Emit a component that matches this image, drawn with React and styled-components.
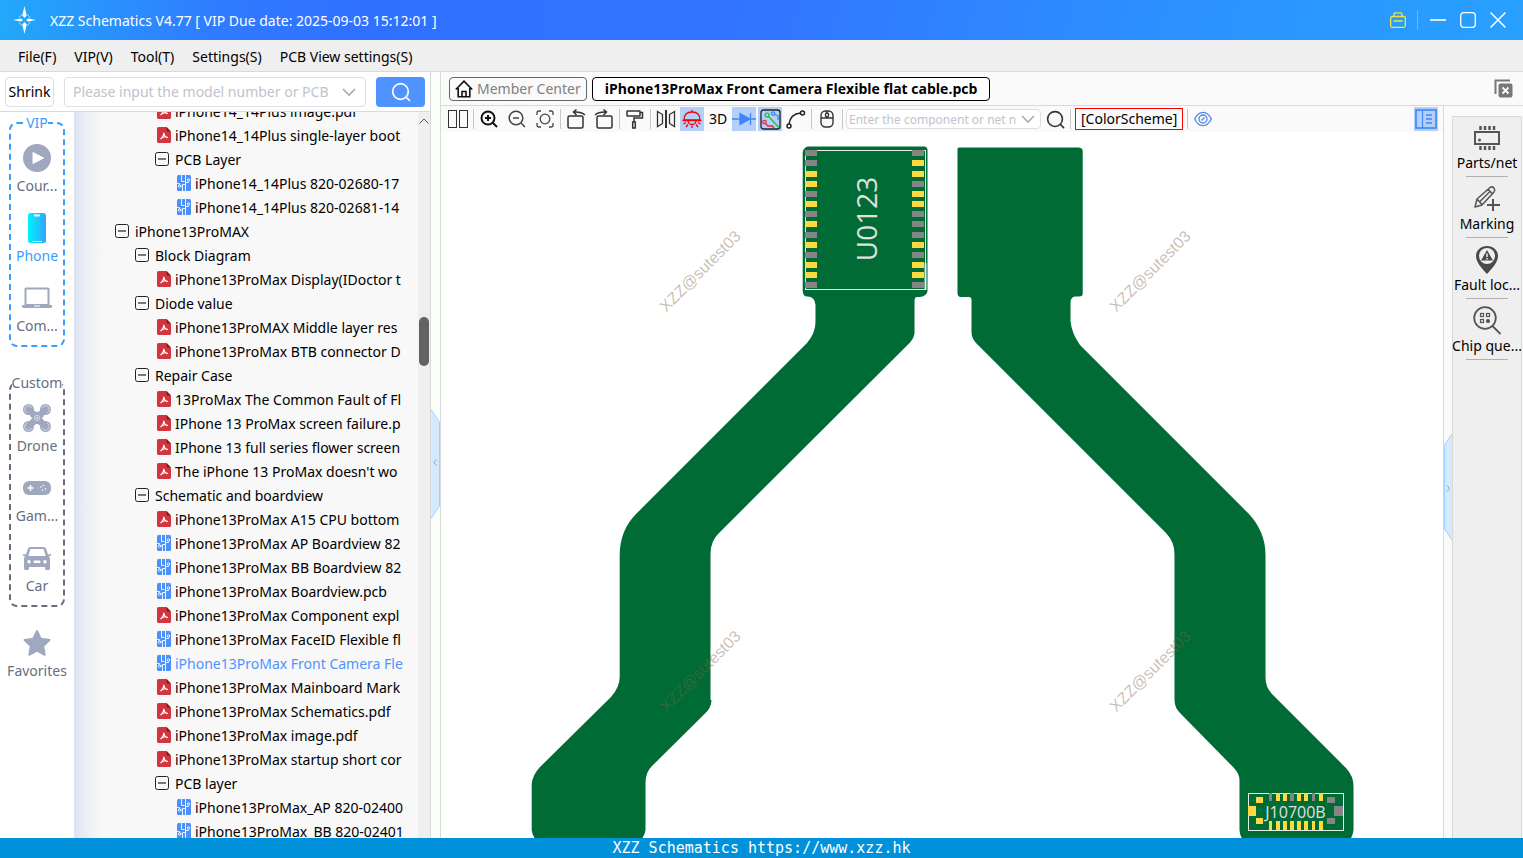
import styled, { createGlobalStyle } from "styled-components";

const GlobalStyle = createGlobalStyle`
  * {
    box-sizing: border-box;
  }
  body {
    margin: 0;
    font-family: "Noto Sans", "Open Sans", "Noto Sans CJK SC", sans-serif;
    font-size: 14px;
    color: #000;
    background: #fff;
  }
  button, input {
    font: inherit;
    color: inherit;
  }
  button {
    padding: 0;
    border: 0;
    background: none;
    cursor: pointer;
  }
  ul {
    margin: 0;
    padding: 0;
    list-style: none;
  }
  svg {
    display: block;
    flex: none;
  }
`;

const Window = styled.div`
  display: flex;
  flex-direction: column;
  height: 100vh;
  overflow: hidden;
`;

const TitleBar = styled.header`
  display: flex;
  align-items: center;
  flex: none;
  height: 40px;
  padding: 0 10px 0 12px;
  color: #fff;
  background: linear-gradient(100deg, #22a9fa 0%, #2f7cff 14%, #3070ff 24%, #3274ff 48%, #2c92ff 78%, #28a0ff 100%);
`;

const Title = styled.h1`
  flex: 1;
  margin: 0 0 0 13px;
  font-size: 14px;
  font-weight: 400;
`;

const WindowButtons = styled.div`
  display: flex;
  align-items: center;
`;

const WindowButton = styled.button`
  display: flex;
  align-items: center;
  justify-content: center;
  width: 30px;
  height: 30px;
`;

const TitleDivider = styled.span`
  width: 1px;
  height: 20px;
  margin: 0 5px 0 4px;
  background: #6cb5ff;
`;

const MenuBar = styled.nav`
  display: flex;
  align-items: center;
  flex: none;
  height: 32px;
  padding: 2px 9px 0;
  background: #efefef;
  border-bottom: 1px solid #d9d9d9;
`;

const MenuItem = styled.button`
  padding: 0 9px;
`;

const Body = styled.div`
  display: flex;
  flex: 1;
  min-height: 0;
`;

const LeftPanel = styled.aside`
  display: flex;
  flex-direction: column;
  flex: none;
  width: 431px;
  border-right: 1px solid #d9d9d9;
`;

const SearchRow = styled.form`
  display: flex;
  align-items: center;
  gap: 10px;
  flex: none;
  height: 40px;
  padding: 0 5px;
  border-bottom: 1px solid #d9d9d9;
`;

const ShrinkButton = styled.button`
  width: 49px;
  height: 30px;
  border: 1px solid #dcdfe6;
  border-radius: 4px;
`;

const Combo = styled.label`
  display: flex;
  align-items: center;
  gap: 5px;
  flex: ${(props) => (props.$width ? "none" : 1)};
  width: ${(props) => props.$width || "auto"};
  height: ${(props) => props.$height};
  padding: 0 ${(props) => props.$pad} 0 0;
  border: 1px solid #dcdfe6;
  border-radius: 4px;
  background: #fff;
`;

const ComboInput = styled.input`
  flex: 1;
  min-width: 0;
  height: 100%;
  padding: 0 0 0 ${(props) => props.$pad};
  border: 0;
  outline: 0;
  background: none;
  font-size: ${(props) => props.$size};

  &::placeholder {
    color: #c0c4cc;
    opacity: 1;
  }
`;

const SearchButton = styled.button`
  display: flex;
  align-items: center;
  justify-content: center;
  width: 49px;
  height: 30px;
  border-radius: 4px;
  background: #4f93ff;
`;

const PanelBody = styled.div`
  display: flex;
  flex: 1;
  min-height: 0;
`;

const SideNav = styled.nav`
  display: flex;
  flex-direction: column;
  align-items: center;
  flex: none;
  width: 74px;
  background: #fff;
`;

const NavGroup = styled.section`
  width: 56px;
  height: 225px;
  margin: ${(props) => props.$gap} 0 0;
  border: 2px dashed ${(props) => props.$color};
  border-radius: 8px;
  display: flex;
  flex-direction: column;
  align-items: center;
`;

const NavLegend = styled.h2`
  margin: -11px 0 0;
  font-size: 14px;
  line-height: 20px;
  font-weight: 400;
  color: ${(props) => props.$color};
  background: #fff;
`;

const NavItem = styled.button`
  display: flex;
  flex-direction: column;
  align-items: center;
  gap: 2px;
  flex: none;
  width: 72px;
  height: 70px;
  padding-top: 9px;
  line-height: 20px;
  color: ${(props) => (props.$active ? "#3b9dff" : "#666e80")};
`;

const NavIcon = styled.span`
  display: flex;
  align-items: center;
  justify-content: center;
  height: 32px;
`;

const Favorites = styled(NavItem)`
  margin-top: 11px;
`;

const TreePane = styled.div`
  flex: 1;
  min-width: 0;
  padding-right: 12px;
  overflow: hidden;
  background: linear-gradient(90deg, #dce3f1 0, #e9edf4 10px, #f8f8f8 30px);
`;

const Tree = styled.ul`
  margin-top: -13px;
  overflow: hidden;
`;

const TreeRow = styled.li`
  display: flex;
  align-items: center;
  gap: ${(props) => (props.$folder ? "6px" : "4px")};
  height: 24px;
  padding-left: ${(props) => props.$indent};
  white-space: nowrap;
  color: ${(props) => (props.$selected ? "#4f93ff" : "#000")};
`;

const ScrollTrack = styled.div`
  display: flex;
  flex-direction: column;
  align-items: center;
  flex: none;
  width: 12px;
  padding-top: 6px;
  background: #efefef;
`;

const ScrollThumb = styled.div`
  width: 10px;
  height: 49px;
  margin-top: 193px;
  border-radius: 5px;
  background: #636363;
`;

const Splitter = styled.div`
  display: flex;
  align-items: center;
  flex: none;
  width: ${(props) => props.$width};
  padding-top: ${(props) => props.$shift};
  background: ${(props) => props.$color};
  border-${(props) => props.$side}: 1px solid #d9d9d9;
`;

const Workspace = styled.main`
  display: flex;
  flex-direction: column;
  flex: 1;
  min-width: 0;
`;

const TabBar = styled.div`
  display: flex;
  align-items: center;
  gap: 5px;
  flex: none;
  height: 34px;
  padding: 0 10px 0 8px;
  background: #fafafa;
  border-bottom: 1px solid #d9d9d9;
`;

const Tab = styled.button`
  display: flex;
  align-items: center;
  gap: 4px;
  height: 24px;
  padding: 0 ${(props) => (props.$active ? "12px" : "5px")};
  border: 1px solid ${(props) => (props.$active ? "#000" : "#666")};
  border-radius: 4px;
  color: ${(props) => (props.$active ? "#000" : "#808080")};
  background: ${(props) => (props.$active ? "#fff" : "#fafafa")};
  font-family: ${(props) => (props.$active ? '"Open Sans", sans-serif' : "inherit")};
  font-weight: ${(props) => (props.$active ? 700 : 400)};
  line-height: 20px;
`;

const CloseAll = styled.button`
  margin-left: auto;
`;

const Stage = styled.div`
  display: flex;
  flex: 1;
  min-height: 0;
`;

const Board = styled.section`
  display: flex;
  flex-direction: column;
  flex: 1;
  min-width: 0;
`;

const Toolbar = styled.div`
  display: flex;
  align-items: center;
  flex: none;
  height: 26px;
  padding: 0 5px 0 3px;
  background: #fafafa;

  ${Combo} {
    margin-left: 2px;
  }
`;

const Tool = styled.button`
  display: flex;
  align-items: center;
  justify-content: center;
  width: 28px;
  height: 24px;
  line-height: 24px;
`;

const ActiveTool = styled(Tool)`
  width: 24px;
  background: #b5cffb;

  & + & {
    margin-left: 2px;
  }
`;

const ToolDivider = styled.span`
  width: 1px;
  height: 20px;
  margin: 0 1px;
  background: #c8c8c8;
`;

const ColorScheme = styled.button`
  height: 22px;
  margin: 0 3px;
  padding: 0 5px;
  border: 1px solid #f00;
  line-height: 20px;
`;

const PanelToggle = styled(ActiveTool)`
  margin-left: auto;
`;

const Canvas = styled.div`
  flex: 1;
  min-height: 0;
  background: #fff;
`;

const Drawing = styled.svg`
  width: 100%;
  height: 100%;

  text {
    font-family: "Open Sans", sans-serif;
  }
  .watermark {
    font-family: "Liberation Sans", Arial, sans-serif;
    font-size: 16px;
    fill: #7d6645;
    fill-opacity: 0.42;
  }
`;

const RightRail = styled.aside`
  flex: none;
  width: 71px;
  padding: 10px 1px 0 0;
  background: #fafafa;
`;

const RailList = styled.div`
  display: flex;
  flex-direction: column;
  align-items: center;
  height: 100%;
  border: 1px solid #d9d9d9;
  border-bottom: 0;
  background: #efefef;
`;

const RailItem = styled.button`
  display: flex;
  flex-direction: column;
  align-items: center;
  flex: none;
  width: 72px;
  height: 61px;
  padding-top: 5px;
  line-height: 18px;
  white-space: nowrap;

  &::after {
    content: "";
    width: 42px;
    height: 1px;
    margin-top: 4px;
    background: #b0b0b0;
  }
`;

const StatusBar = styled.footer`
  display: flex;
  align-items: center;
  justify-content: center;
  flex: none;
  height: 20px;
  color: #fff;
  background: #0091da;
  font-family: "DejaVu Sans Mono", "Liberation Mono", monospace;
  font-size: 15px;
  line-height: 20px;
`;

const Logo = () => (
  <svg width="25" height="30" viewBox="0 0 25 30" fill="#fff">
    <circle cx="12.500" cy="15" r="6" fill="none" stroke="#9fd4ff" strokeDasharray="5 4.4" strokeDashoffset="-2" />
    <path d="M12.500 1L14.700 10.500L12.500 13L10.300 10.500ZM12.500 29L14.700 19.500L12.500 17L10.300 19.500ZM1 15L9 13.500L11 15L9 16.500ZM24 15L16 13.500L14 15L16 16.500Z" />
  </svg>
);

const Chevron = ({ size = 14 }) => (
  <svg width={size} height={size} viewBox="0 0 14 14" fill="none" stroke="#a8abb2" strokeWidth="1.6">
    <path d="M1 4L7 10L13 4" />
  </svg>
);

const Magnifier = ({ size = 20, color = "#333" }) => (
  <svg width={size} height={size} viewBox="0 0 20 20" fill="none" stroke={color} strokeWidth="1.7" strokeLinecap="round">
    <circle cx="9.500" cy="9.500" r="7.800" />
    <path d="M15.300 15.300L18.500 18.500" />
  </svg>
);

const PdfIcon = () => (
  <svg width="14" height="16" viewBox="0 0 14 16">
    <path d="M1.500 0H9.500L14 4.500V14.500Q14 16 12.500 16H1.500Q0 16 0 14.500V1.500Q0 0 1.500 0Z" fill="#d3353f" />
    <path d="M9.500 0L14 4.500H9.500Z" fill="#8f1a22" />
    <path d="M3.500 12C5 11 6.800 8.800 6.800 5.800C6.800 8.500 8.400 10.200 10.800 10.500" fill="none" stroke="#fff" strokeWidth="1.300" />
    <path d="M5 10.600Q7 9.600 9 9.900" fill="none" stroke="#fff" />
  </svg>
);

const PcbIcon = () => (
  <svg width="14" height="16" viewBox="0 0 14 16">
    <rect width="14" height="16" rx="1.500" fill="#4a90ff" />
    <g fill="none" stroke="#fff" strokeWidth="0.900">
      <path d="M4.500 0V6.500H7.500M8.500 0V16M8.500 7.500H11.500V6.500M0 8.500H2.500V10M3.500 11H5.500V16M5.500 11V9.500H8.500" />
      <circle cx="11.500" cy="5" r="1.200" />
      <circle cx="2.500" cy="11" r="1.200" />
    </g>
  </svg>
);

const Collapse = () => (
  <svg width="14" height="14" viewBox="0 0 14 14" fill="none" stroke="#222">
    <rect x="0.500" y="0.500" width="13" height="13" rx="2" />
    <path d="M3 7H11" strokeWidth="1.200" />
  </svg>
);

const navIcons = {
  play: (
    <svg width="28" height="28" viewBox="0 0 28 28">
      <circle cx="14" cy="14" r="14" fill="#9fa8bf" />
      <path d="M10 8.500L20.500 14L10 19.500Z" fill="#fff" stroke="#fff" strokeLinejoin="round" />
    </svg>
  ),
  phone: (
    <svg width="18" height="30" viewBox="0 0 18 30">
      <defs>
        <linearGradient id="screen">
          <stop offset="0" stopColor="#00f2fe" />
          <stop offset="1" stopColor="#35a4ff" />
        </linearGradient>
      </defs>
      <rect width="18" height="30" rx="2.500" fill="url(#screen)" />
      <path d="M6 1.500H12V2.500Q12 3.500 11 3.500H7Q6 3.500 6 2.500Z" fill="#fff" />
      <path d="M4 28.500H14" stroke="#bdf3ff" />
    </svg>
  ),
  laptop: (
    <svg width="30" height="22" viewBox="0 0 30 22" fill="#9fa8bf">
      <path fillRule="evenodd" d="M4 0.500H26Q27.500 0.500 27.500 2V18H2.500V2Q2.500 0.500 4 0.500ZM4.500 2.500V17H25.500V2.500Z" />
      <path d="M0 18H30V19.500Q30 21 28 21H2Q0 21 0 19.500Z" />
      <path d="M12 19H18" stroke="#fff" />
    </svg>
  ),
  drone: (
    <svg width="28" height="28" viewBox="0 0 28 28" fill="#9fa8bf">
      <path d="M5 5L14 11L23 5L17 14L23 23L14 17L5 23L11 14Z" stroke="#9fa8bf" strokeWidth="4" strokeLinejoin="round" />
      <circle cx="5.500" cy="5.500" r="5.500" />
      <circle cx="22.500" cy="5.500" r="5.500" />
      <circle cx="5.500" cy="22.500" r="5.500" />
      <circle cx="22.500" cy="22.500" r="5.500" />
      <g fill="none" stroke="#dfe3ec" strokeWidth="0.800">
        <circle cx="14" cy="14" r="2.600" />
        <path d="M9 4A3.800 3.800 0 1 0 4 9M19 4A3.800 3.800 0 1 1 24 9M9 24A3.800 3.800 0 1 1 4 19M19 24A3.800 3.800 0 1 0 24 19" />
      </g>
      <circle cx="14" cy="14" r="1.100" fill="#dfe3ec" />
    </svg>
  ),
  gamepad: (
    <svg width="28" height="14" viewBox="0 0 28 14">
      <rect width="28" height="14" rx="6" fill="#9fa8bf" />
      <path d="M7.500 4V10M4.500 7H10.500" stroke="#fff" strokeWidth="1.500" />
      <g fill="#fff">
        <circle cx="18" cy="6" r="0.800" />
        <circle cx="20.500" cy="4.500" r="0.800" />
        <circle cx="19.500" cy="9" r="0.800" />
        <circle cx="22.500" cy="8" r="0.800" />
      </g>
    </svg>
  ),
  car: (
    <svg width="28" height="23" viewBox="0 0 28 23" fill="#9fa8bf">
      <path
        fillRule="evenodd"
        d="M7.500 0H20.500Q22.500 0 23.200 2L25 7.500L28 7V8.500L26 9.500Q27 10.500 27 12V21.500Q27 23 25.500 23H23.500Q22 23 22 21.500V20H6V21.500Q6 23 4.500 23H2.500Q1 23 1 21.500V12Q1 10.500 2 9.500L0 8.500V7L3 7.500L4.800 2Q5.500 0 7.500 0ZM7.500 2L5.300 9H22.700L20.500 2Z"
      />
      <g fill="#fff">
        <circle cx="6" cy="14.800" r="1.700" />
        <circle cx="22" cy="14.800" r="1.700" />
        <rect x="10.500" y="13.500" width="7" height="2.500" rx="1" />
      </g>
    </svg>
  ),
  star: (
    <svg width="28" height="28" viewBox="0 0 28 28" fill="#9fa8bf" stroke="#9fa8bf" strokeWidth="2" strokeLinejoin="round">
      <path d="M14 2L17.700 9.700L26.500 11L20.200 17L21.700 25.800L14 21.700L6.300 25.800L7.800 17L1.500 11L10.300 9.700Z" />
    </svg>
  ),
};

const vipItems = [
  { label: "Cour...", icon: "play" },
  { label: "Phone", icon: "phone", active: true },
  { label: "Com...", icon: "laptop" },
];

const customItems = [
  { label: "Drone", icon: "drone" },
  { label: "Gam...", icon: "gamepad" },
  { label: "Car", icon: "car" },
];

const tree = [
  [4, "pdf", "iPhone14_14Plus image.pdf"],
  [4, "pdf", "iPhone14_14Plus single-layer boot"],
  [4, "dir", "PCB Layer"],
  [5, "pcb", "iPhone14_14Plus 820-02680-17"],
  [5, "pcb", "iPhone14_14Plus 820-02681-14"],
  [2, "dir", "iPhone13ProMAX"],
  [3, "dir", "Block Diagram"],
  [4, "pdf", "iPhone13ProMax Display(IDoctor t"],
  [3, "dir", "Diode value"],
  [4, "pdf", "iPhone13ProMAX Middle layer res"],
  [4, "pdf", "iPhone13ProMax BTB connector D"],
  [3, "dir", "Repair Case"],
  [4, "pdf", "13ProMax The Common Fault of Fl"],
  [4, "pdf", "IPhone 13 ProMax screen failure.p"],
  [4, "pdf", "IPhone 13 full series flower screen"],
  [4, "pdf", "The iPhone 13 ProMax doesn't wo"],
  [3, "dir", "Schematic and boardview"],
  [4, "pdf", "iPhone13ProMax A15 CPU bottom"],
  [4, "pcb", "iPhone13ProMax AP Boardview 82"],
  [4, "pcb", "iPhone13ProMax BB Boardview 82"],
  [4, "pcb", "iPhone13ProMax Boardview.pcb"],
  [4, "pdf", "iPhone13ProMax Component expl"],
  [4, "pcb", "iPhone13ProMax FaceID Flexible fl"],
  [4, "pcb", "iPhone13ProMax Front Camera Fle", true],
  [4, "pdf", "iPhone13ProMax Mainboard Mark"],
  [4, "pdf", "iPhone13ProMax Schematics.pdf"],
  [4, "pdf", "iPhone13ProMax image.pdf"],
  [4, "pdf", "iPhone13ProMax startup short cor"],
  [4, "dir", "PCB layer"],
  [5, "pcb", "iPhone13ProMax_AP 820-02400"],
  [5, "pcb", "iPhone13ProMax_BB 820-02401"],
];

// folder toggles sit two pixels left of the file icons
const indentOf = (level, kind) => `${level * 20 + (kind === "dir" ? 1 : 3)}px`;

const treeIcons = { pdf: <PdfIcon />, pcb: <PcbIcon />, dir: <Collapse /> };

function NavButton({ item }) {
  return (
    <NavItem $active={item.active}>
      <NavIcon>{navIcons[item.icon]}</NavIcon>
      {item.label}
    </NavItem>
  );
}

const toolIcons = {
  split: (
    <svg width="20" height="18" viewBox="0 0 20 18" fill="none" stroke="#333">
      <rect x="0.500" y="0.500" width="8" height="17" />
      <rect x="11.500" y="0.500" width="8" height="17" />
    </svg>
  ),
  zoomIn: (
    <svg width="18" height="18" viewBox="0 0 18 18" fill="none" stroke="#111" strokeWidth="2">
      <circle cx="8" cy="8" r="6.500" />
      <path d="M13 13L17 17M5 8H11M8 5V11" />
    </svg>
  ),
  zoomOut: (
    <svg width="18" height="18" viewBox="0 0 18 18" fill="none" stroke="#444" strokeWidth="1.500">
      <circle cx="8" cy="8" r="6.800" />
      <path d="M13 13L17 17M5 8H11" />
    </svg>
  ),
  fit: (
    <svg width="18" height="18" viewBox="0 0 18 18" fill="none" stroke="#444" strokeWidth="1.300">
      <circle cx="9" cy="9" r="4.800" />
      <path d="M1 5V3Q1 1 3 1H5M13 1H15Q17 1 17 3V5M17 13V15Q17 17 15 17H13M5 17H3Q1 17 1 15V13" />
    </svg>
  ),
  rotateLeft: (
    <svg width="20" height="20" viewBox="0 0 20 20" fill="none" stroke="#333" strokeWidth="1.500">
      <rect x="2" y="7" width="15" height="12" rx="1.500" />
      <path d="M19 6Q15 2.500 8 3M10.500 0.500L7.500 3L10.500 6" />
    </svg>
  ),
  rotateRight: (
    <svg width="20" height="20" viewBox="0 0 20 20" fill="none" stroke="#333" strokeWidth="1.500">
      <rect x="3" y="7" width="15" height="12" rx="1.500" />
      <path d="M1 6Q5 2.500 12 3M9.500 0.500L12.500 3L9.500 6" />
    </svg>
  ),
  paint: (
    <svg width="18" height="20" viewBox="0 0 18 20" fill="none" stroke="#333" strokeWidth="1.500">
      <rect x="1" y="2" width="13" height="5" rx="0.500" />
      <path d="M14 3.500H16.500V9H8V13" />
      <rect x="6.700" y="13" width="2.600" height="6" />
    </svg>
  ),
  mirror: (
    <svg width="20" height="18" viewBox="0 0 20 18" fill="none" stroke="#333" strokeWidth="1.300">
      <path d="M1.500 1.500L6.500 4.500V13.500L1.500 16.500ZM18.500 1.500L13.500 4.500V13.500L18.500 16.500Z" />
      <path d="M10 0V18" strokeWidth="2" />
    </svg>
  ),
  lamp: (
    <svg width="20" height="20" viewBox="0 0 20 20" fill="none" stroke="#f00" strokeWidth="1.300">
      <path d="M2 11Q2 3 10 3Q18 3 18 11Z" />
      <path d="M0.500 11.500H19.500M6 12Q6.500 15.500 10 15.500Q13.500 15.500 14 12M10 1V3M10 16.500V19M6 15.500L4 18M14 15.500L16 18M4 13.500L1.500 15M16 13.500L18.500 15" />
    </svg>
  ),
  diode: (
    <svg width="24" height="14" viewBox="0 0 24 14" fill="#4086f5" stroke="#4086f5" strokeWidth="1.300">
      <path d="M0 7H24M18.500 1V13" />
      <path d="M8 1.500L18 7L8 12.500Z" />
    </svg>
  ),
  route: (
    <svg width="21" height="21" viewBox="0 0 21 21" fill="none" strokeWidth="1.300">
      <rect x="1" y="1" width="19" height="19" rx="2.500" stroke="#222" />
      <g stroke="#22c03a">
        <circle cx="7" cy="6" r="1.900" />
        <path d="M8.500 7.500L19 18.500" />
      </g>
      <g stroke="#4086f5">
        <circle cx="13" cy="4.500" r="1.700" />
        <path d="M14.500 5.500L18 7V11" />
      </g>
      <g stroke="#f02a2a">
        <circle cx="4.500" cy="13" r="1.700" />
        <path d="M5.500 14.500L8 17H12.500L14 19" />
      </g>
    </svg>
  ),
  curve: (
    <svg width="20" height="20" viewBox="0 0 20 20" fill="none" stroke="#222" strokeWidth="1.500">
      <circle cx="16.500" cy="4" r="2" />
      <circle cx="3" cy="17" r="2" />
      <path d="M14.500 4Q4.500 5 3 15" />
    </svg>
  ),
  mouse: (
    <svg width="14" height="18" viewBox="0 0 14 18" fill="none" stroke="#333" strokeWidth="1.400">
      <rect x="1" y="1" width="12" height="16" rx="4.500" />
      <path d="M1 8H13M7 1V3M7 6.500V8" />
      <rect x="5.500" y="3" width="3" height="4" rx="1.500" />
    </svg>
  ),
  eye: (
    <svg width="18" height="16" viewBox="0 0 18 16" fill="none" stroke="#4f86e8" strokeWidth="1.300">
      <path d="M0.700 8Q4 1.300 9 1.300Q14 1.300 17.300 8Q14 14.700 9 14.700Q4 14.700 0.700 8Z" />
      <circle cx="9" cy="8" r="4" />
      <path d="M7.500 9.500L10.500 6.500" />
    </svg>
  ),
  panel: (
    <svg width="22" height="20" viewBox="0 0 22 20" fill="none" stroke="#4086f5" strokeWidth="1.600">
      <rect x="1" y="1" width="20" height="18" />
      <path d="M7.500 1V19" strokeWidth="1.200" />
      <path d="M11 6H17M11 10H17M11 14H17" strokeWidth="1.300" />
    </svg>
  ),
};

const railItems = [
  {
    label: "Parts/net",
    icon: (
      <svg width="26" height="32" viewBox="0 0 26 32" fill="none" stroke="#555" strokeWidth="2">
        <rect x="1" y="10" width="24" height="12" />
        <path d="M6.500 4V8M11 4V8M15.500 4V8M20 4V8M6.500 24V28M11 24V28M15.500 24V28M20 24V28" strokeWidth="2.500" />
        <circle cx="5.500" cy="18" r="1.500" fill="#555" stroke="none" />
      </svg>
    ),
  },
  {
    label: "Marking",
    icon: (
      <svg width="26" height="32" viewBox="0 0 26 32" fill="none" stroke="#555" strokeWidth="1.500">
        <path d="M1 24L3 16L16 4.500Q18 3 20 5Q21.500 7 20 9L8 22ZM3 16L8 21.500M14 6L18.500 11M6 18.500L15.500 9" strokeLinejoin="round" />
        <path d="M19 16V28M13 22H26" strokeWidth="2" />
      </svg>
    ),
  },
  {
    label: "Fault loc...",
    icon: (
      <svg width="26" height="32" viewBox="0 0 26 32">
        <path d="M13 2C19.500 2 24 6.500 24 12C24 18.500 18 24.500 13 30C8 24.500 2 18.500 2 12C2 6.500 6.500 2 13 2Z" fill="#4a4a4a" />
        <circle cx="13" cy="12" r="8" fill="#efefef" />
        <path d="M13 6L19 16.500H7Z" fill="#4a4a4a" />
        <path d="M13 9.500V13M13 14V15.500" stroke="#efefef" strokeWidth="1.500" />
      </svg>
    ),
  },
  {
    label: "Chip que...",
    icon: (
      <svg width="28" height="32" viewBox="0 0 28 32" fill="none" stroke="#555" strokeWidth="1.800">
        <circle cx="12" cy="13" r="10.800" />
        <path d="M19.500 21L27.500 29" />
        <g strokeWidth="1.200">
          <rect x="7.500" y="8.500" width="3" height="3" />
          <rect x="13.500" y="8.500" width="3" height="3" />
          <rect x="7.500" y="14.500" width="3" height="3" />
          <circle cx="15" cy="16" r="1.500" fill="#555" />
        </g>
      </svg>
    ),
  },
];

const padRows = [150, 160, 171, 181, 191, 201, 211, 221, 232, 242, 252, 262, 272, 282];
const leftPads = "ggyygygygygyyg";
const rightPads = "gyygyygggygyyg";
const connectorCols = [
  [1269, 3, "g"],
  [1276, 4, "y"],
  [1283, 4, "y"],
  [1290, 4, "g"],
  [1297, 4, "y"],
  [1304, 4, "y"],
  [1312, 3, "g"],
  [1319, 4, "y"],
];
const padColor = (code) => (code === "g" ? "#858585" : "#ffd940");

function FlexCable() {
  return (
    <Drawing viewBox="441 132 1002 706" preserveAspectRatio="xMinYMin slice">
      <g fill="#006b35">
        <path d="M808 146.500H924Q927.500 146.500 927.500 150V291Q927 296 920 297H917Q914.500 297 914.500 301V333Q914 338 910 342.500L719 533Q710.500 541 710.500 554V700H711.500Q711.500 708 704 714.500L652 766Q645.500 772 645.500 783V830Q645 835 641 840H536Q532 835 531.700 830V784Q532.500 775 540 767L611 697Q619.700 687 619.700 677V555Q619.700 530 637 513L807 343Q815.500 333 815.500 322V305Q815 297 808 296.500Q803 297 802.700 291V152Q804 147 808 146.500Z" />
        <path d="M959 147.500H1078Q1082.700 147.500 1082.700 151V294Q1082.500 296.500 1079 296.500H1075Q1070.500 297 1070.500 303V321Q1071.500 333 1080 345L1249 514Q1265.500 532 1265.500 555V678Q1265.500 687 1272 694L1346 768Q1353.500 776 1353.500 786V830Q1353 835 1350 840H1243Q1239.500 835 1239.500 830V780Q1239.500 774 1234 768L1181 714Q1174.500 708 1174.500 700V554Q1174.500 542 1166 533L976 343Q971.500 338 971.500 332V300Q971.500 297 969 297H961Q957.500 297 957.500 293V149Q957.500 147.500 959 147.500Z" />
      </g>
      <rect x="805.500" y="150.500" width="120" height="139" fill="none" stroke="#e4efe8" />
      <path d="M925.500 263V290" stroke="#e4efe8" strokeWidth="2" />
      {padRows.map((y, i) => (
        <g key={y}>
          <rect x="805" y={y} width="12" height="6" fill={padColor(leftPads[i])} />
          <rect x="912" y={y} width="12" height="6" fill={padColor(rightPads[i])} />
        </g>
      ))}
      <text transform="translate(877 219) rotate(-90)" textAnchor="middle" fontSize="28" fill="#e0e0e0">
        U0123
      </text>
      <rect x="1248.500" y="793.500" width="95" height="37" fill="none" stroke="#e4efe8" />
      {connectorCols.map(([x, width, code]) => (
        <g key={x}>
          <rect x={x} y="793" width={width} height="8" fill={padColor(code)} />
          <rect x={x} y="821" width={width} height="9" fill="#ffd940" />
        </g>
      ))}
      <path d="M1256 797h7v6h-7zM1256 818h7v6h-7zM1248 806h8v10h-8z" fill="#ffd940" />
      <path d="M1327 797h8v6h-8zM1327 818h8v6h-8zM1334 806h9v10h-9z" fill="#858585" />
      <text x="1295.500" y="818" textAnchor="middle" fontSize="16" fill="#e0e0e0">
        J10700B
      </text>
      {[
        [704, 275],
        [1154, 275],
        [704, 675],
        [1154, 675],
      ].map(([x, y]) => (
        <text key={`${x}-${y}`} className="watermark" transform={`translate(${x} ${y}) rotate(-45)`} textAnchor="middle">
          XZZ@sutest03
        </text>
      ))}
    </Drawing>
  );
}

function App() {
  return (
    <Window>
      <GlobalStyle />
      <TitleBar>
        <Logo />
        <Title>XZZ Schematics V4.77 [ VIP Due date: 2025-09-03 15:12:01 ]</Title>
        <WindowButtons>
          <WindowButton aria-label="Toolbox">
            <svg width="16" height="16" viewBox="0 0 16 16" fill="none" stroke="#f2e63a" strokeWidth="1.300">
              <rect x="0.700" y="4.500" width="14.600" height="10.800" rx="1.500" />
              <path d="M4 4.500V2.500Q4 0.800 5.500 0.800H10.500Q12 0.800 12 2.500V4.500M3.500 9H12.500" />
            </svg>
          </WindowButton>
          <TitleDivider />
          <WindowButton aria-label="Minimize">
            <svg width="16" height="16" viewBox="0 0 16 16" stroke="#fff" strokeWidth="1.600">
              <path d="M0 8H16" />
            </svg>
          </WindowButton>
          <WindowButton aria-label="Maximize">
            <svg width="16" height="16" viewBox="0 0 16 16" fill="none" stroke="#fff" strokeWidth="1.300">
              <rect x="0.700" y="0.700" width="14.600" height="14.600" rx="3" />
            </svg>
          </WindowButton>
          <WindowButton aria-label="Close">
            <svg width="16" height="16" viewBox="0 0 16 16" stroke="#fff" strokeWidth="1.500">
              <path d="M0.500 0.500L15.500 15.500M15.500 0.500L0.500 15.500" />
            </svg>
          </WindowButton>
        </WindowButtons>
      </TitleBar>
      <MenuBar>
        {["File(F)", "VIP(V)", "Tool(T)", "Settings(S)", "PCB View settings(S)"].map((name) => (
          <MenuItem key={name}>{name}</MenuItem>
        ))}
      </MenuBar>
      <Body>
        <LeftPanel>
          <SearchRow onSubmit={(e) => e.preventDefault()}>
            <ShrinkButton type="button">Shrink</ShrinkButton>
            <Combo $height="30px" $pad="9px">
              <ComboInput $size="14px" $pad="8px" aria-label="Model number" placeholder="Please input the model number or PCB" />
              <Chevron />
            </Combo>
            <SearchButton aria-label="Search">
              <Magnifier color="#fff" />
            </SearchButton>
          </SearchRow>
          <PanelBody>
            <SideNav>
              <NavGroup $gap="10px" $color="#3b9dff">
                <NavLegend $color="#3b9dff">VIP</NavLegend>
                {vipItems.map((item) => (
                  <NavButton key={item.label} item={item} />
                ))}
              </NavGroup>
              <NavGroup $gap="35px" $color="#666e80">
                <NavLegend $color="#666e80">Custom</NavLegend>
                {customItems.map((item) => (
                  <NavButton key={item.label} item={item} />
                ))}
              </NavGroup>
              <Favorites>
                <NavIcon>{navIcons.star}</NavIcon>
                Favorites
              </Favorites>
            </SideNav>
            <TreePane>
              <Tree>
                {tree.map(([level, kind, name, selected]) => (
                  <TreeRow key={name} $indent={indentOf(level, kind)} $folder={kind === "dir"} $selected={selected}>
                    {treeIcons[kind]}
                    {name}
                  </TreeRow>
                ))}
              </Tree>
            </TreePane>
            <ScrollTrack>
              <svg width="10" height="6" viewBox="0 0 10 6" fill="none" stroke="#555">
                <path d="M0.500 5.500L5 1L9.500 5.500" />
              </svg>
              <ScrollThumb />
            </ScrollTrack>
          </PanelBody>
        </LeftPanel>
        <Splitter $width="10px" $shift="18px" $color="#fafffa" $side="right">
          <button aria-label="Collapse left panel">
            <svg width="9" height="110" viewBox="0 0 9 110" fill="none">
              <path d="M0 0.500L8.500 13V97L0 109.500Z" fill="#d6eaff" />
              <path d="M0 0.500L8.500 13V97L0 109.500" stroke="#a0d2ff" />
              <path d="M5.500 50.500L3 53.500L5.500 56.500" stroke="#5aaef5" />
            </svg>
          </button>
        </Splitter>
        <Workspace>
          <TabBar>
            <Tab>
              <svg width="18" height="18" viewBox="0 0 18 18" fill="none" stroke="#111" strokeWidth="1.600">
                <path d="M0.800 9.500L9 1.200L17.200 9.500M3.200 8V16.700H14.800V8M7 16.500V11.500H11V16.500" />
              </svg>
              Member Center
            </Tab>
            <Tab $active>iPhone13ProMax Front Camera Flexible flat cable.pcb</Tab>
            <CloseAll aria-label="Close all tabs">
              <svg width="19" height="19" viewBox="0 0 19 19">
                <path d="M1.500 15V1.500H16" fill="none" stroke="#777" strokeWidth="2" />
                <rect x="4.500" y="4.500" width="14" height="14" rx="2" fill="#777" />
                <path d="M8.500 8.500L14.500 14.500M14.500 8.500L8.500 14.500" stroke="#fff" strokeWidth="1.800" />
              </svg>
            </CloseAll>
          </TabBar>
          <Stage>
            <Board>
              <Toolbar>
                <Tool aria-label="Split view">{toolIcons.split}</Tool>
                <ToolDivider />
                <Tool aria-label="Zoom in">{toolIcons.zoomIn}</Tool>
                <Tool aria-label="Zoom out">{toolIcons.zoomOut}</Tool>
                <Tool aria-label="Fit">{toolIcons.fit}</Tool>
                <ToolDivider />
                <Tool aria-label="Rotate left">{toolIcons.rotateLeft}</Tool>
                <Tool aria-label="Rotate right">{toolIcons.rotateRight}</Tool>
                <ToolDivider />
                <Tool aria-label="Paint">{toolIcons.paint}</Tool>
                <ToolDivider />
                <Tool aria-label="Mirror">{toolIcons.mirror}</Tool>
                <ActiveTool aria-label="Lamp">{toolIcons.lamp}</ActiveTool>
                <Tool>3D</Tool>
                <ActiveTool aria-label="Diode">{toolIcons.diode}</ActiveTool>
                <ActiveTool aria-label="Routes">{toolIcons.route}</ActiveTool>
                <Tool aria-label="Curve">{toolIcons.curve}</Tool>
                <ToolDivider />
                <Tool aria-label="Mouse">{toolIcons.mouse}</Tool>
                <ToolDivider />
                <Combo $width="195px" $height="20px" $pad="5px">
                  <ComboInput $size="12px" $pad="2px" aria-label="Component or net" placeholder="Enter the component or net name" />
                  <Chevron />
                </Combo>
                <Tool aria-label="Find">
                  <Magnifier size={19} />
                </Tool>
                <ToolDivider />
                <ColorScheme>[ColorScheme]</ColorScheme>
                <ToolDivider />
                <Tool aria-label="Show">{toolIcons.eye}</Tool>
                <PanelToggle aria-label="Toggle panel">{toolIcons.panel}</PanelToggle>
              </Toolbar>
              <Canvas>
                <FlexCable />
              </Canvas>
            </Board>
            <Splitter $width="9px" $shift="30px" $color="#fafafa" $side="left">
              <button aria-label="Collapse right panel">
                <svg width="9" height="110" viewBox="0 0 9 110" fill="none">
                  <path d="M9 0.500L0.500 13V97L9 109.500Z" fill="#d6eaff" />
                  <path d="M9 0.500L0.500 13V97L9 109.500" stroke="#a0d2ff" />
                  <path d="M3 53.500L5.500 56.500L3 59.500" stroke="#5aaef5" />
                </svg>
              </button>
            </Splitter>
            <RightRail>
              <RailList>
                {railItems.map((item) => (
                  <RailItem key={item.label}>
                    {item.icon}
                    {item.label}
                  </RailItem>
                ))}
              </RailList>
            </RightRail>
          </Stage>
        </Workspace>
      </Body>
      <StatusBar>XZZ Schematics https://www.xzz.hk</StatusBar>
    </Window>
  );
}

export default App;
